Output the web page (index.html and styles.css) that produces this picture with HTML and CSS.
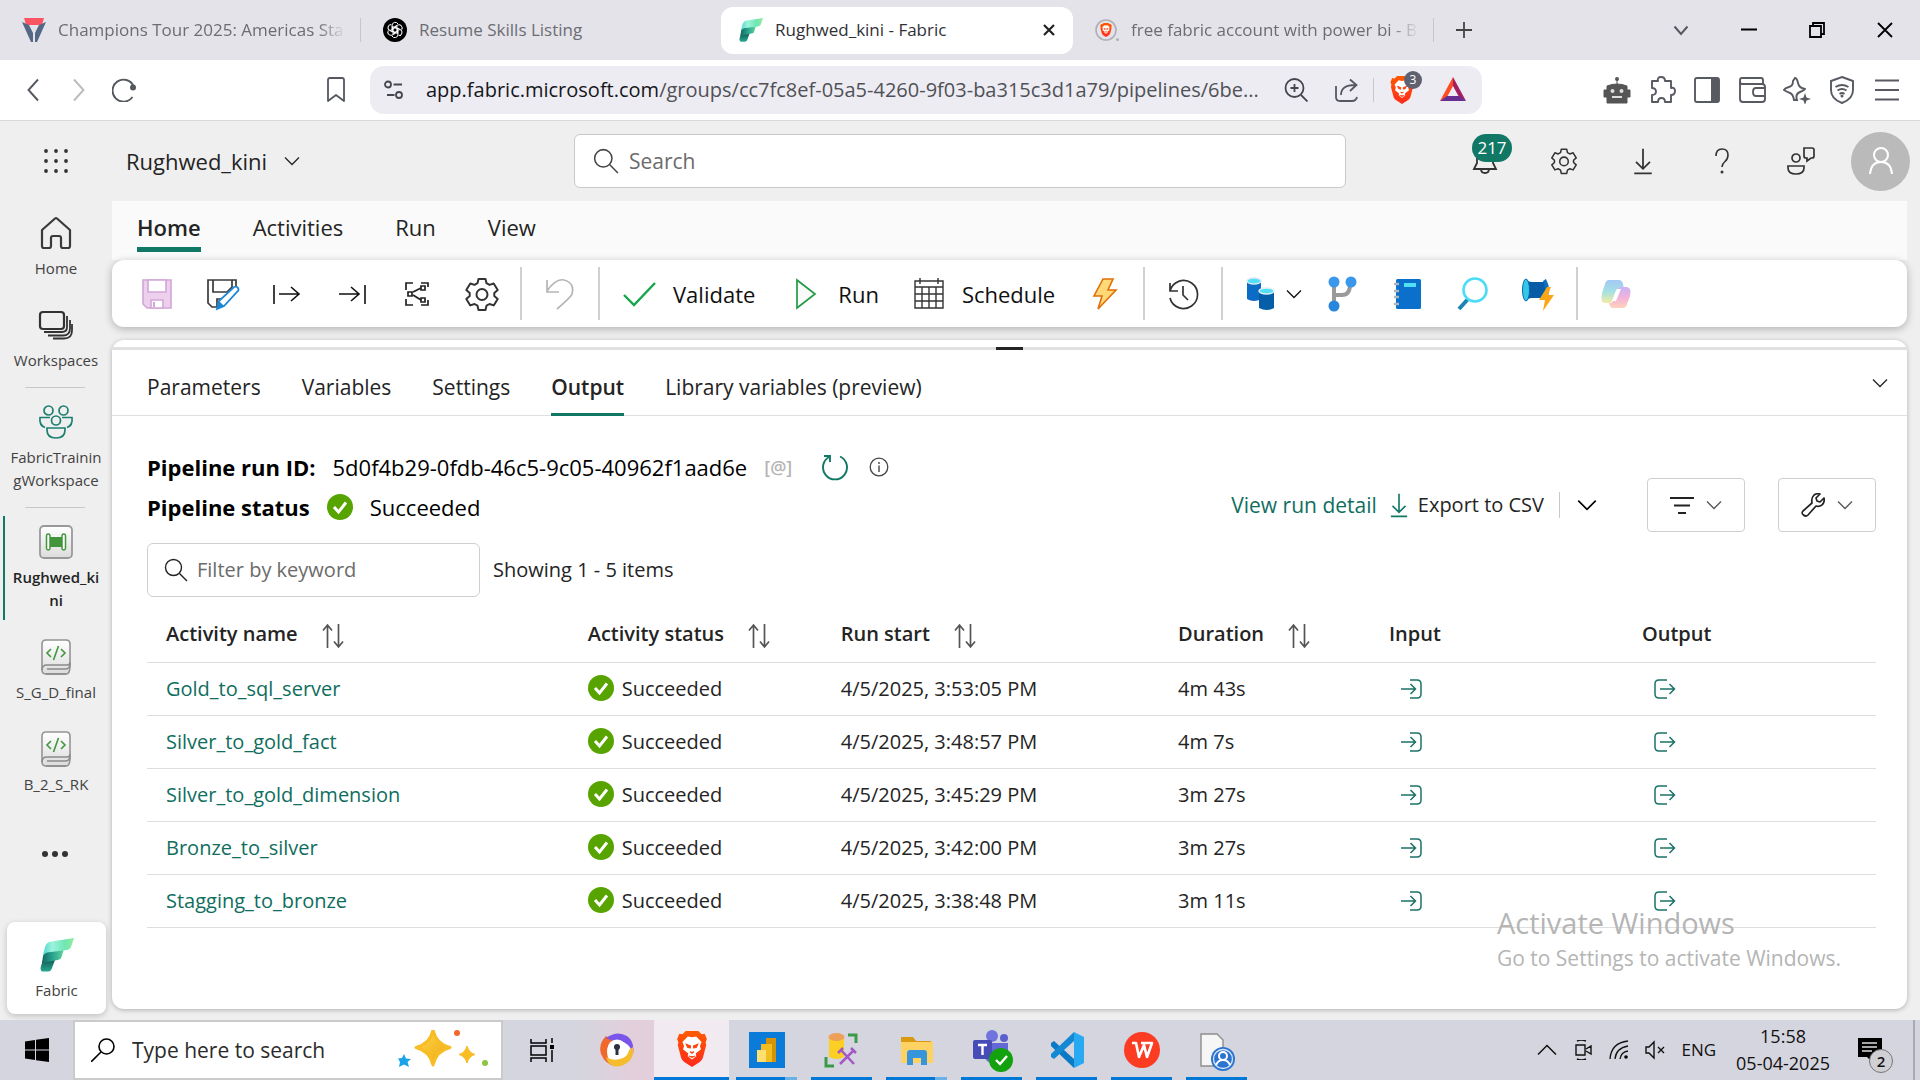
FILE: index.html
```html
<!DOCTYPE html>
<html lang="en">
<head>
<meta charset="utf-8">
<title>Rughwed_kini - Fabric</title>
<link rel="stylesheet" href="styles.css">
</head>
<body>
<svg class="sprite" aria-hidden="true">
  <defs>
    <linearGradient id="fab-a" x1="0" y1="0" x2="1" y2="0"><stop offset="0" stop-color="#4fd8cf"/><stop offset=".3" stop-color="#9df3dc"/><stop offset=".7" stop-color="#6fe6b4"/><stop offset="1" stop-color="#93ea9c"/></linearGradient>
    <linearGradient id="fab-b" x1="0" y1="0" x2="1" y2="0"><stop offset="0" stop-color="#12685f"/><stop offset=".5" stop-color="#2ba58f"/><stop offset="1" stop-color="#62d69b"/></linearGradient>
    <linearGradient id="fab-c" x1="0" y1="0" x2="0" y2="1"><stop offset="0" stop-color="#0b4a46"/><stop offset="1" stop-color="#28a892"/></linearGradient>
    <linearGradient id="metal" x1="0" y1="0" x2="0" y2="1"><stop offset="0" stop-color="#fff"/><stop offset="1" stop-color="#dcdcdc"/></linearGradient>
    <linearGradient id="cop-a" x1="0" y1="0" x2="0" y2="1"><stop offset="0" stop-color="#a3c8f5"/><stop offset=".5" stop-color="#a4e0e4"/><stop offset="1" stop-color="#f3eda0"/></linearGradient>
    <linearGradient id="cop-b" x1="0" y1="0" x2="0" y2="1"><stop offset="0" stop-color="#c9b4f4"/><stop offset=".5" stop-color="#f2b2dc"/><stop offset="1" stop-color="#ffd2b8"/></linearGradient>
    <linearGradient id="brave-g" x1="0" y1="0" x2="0" y2="1"><stop offset="0" stop-color="#ff5a00"/><stop offset="1" stop-color="#ff2a1c"/></linearGradient>
    <linearGradient id="star-g" x1="0" y1="0" x2="1" y2="1"><stop offset="0" stop-color="#ffd84a"/><stop offset="1" stop-color="#efa510"/></linearGradient>
  </defs>
  <symbol id="i-chevron" viewBox="0 0 16 16"><path d="M1 4.500l7 7 7-7" fill="none" stroke="currentColor" stroke-width="1.300"/></symbol>
  <symbol id="i-search" viewBox="0 0 24 24"><circle cx="9.500" cy="9.500" r="8" fill="none" stroke="currentColor" stroke-width="1.400"/><path d="M15.500 15.500l7.500 7.500" stroke="currentColor" stroke-width="1.400"/></symbol>
  <symbol id="i-fabric" viewBox="0 0 34 34"><path d="M1 28l3-9 11 3-3 8c-.7 2-1.500 3.500-4 3.500H3c-2 0-3-2-2-5.500z" fill="url(#fab-c)"/><path d="M3 18c1-3 2-4 5-4.500l16-2.500-2.500 8c-.6 2-1.500 2.500-4 3L2 25z" fill="url(#fab-b)"/><path d="M5 9c1.500-4 3-5 6.500-5.500L34 0l-3 9c-.8 2-2 2.500-4 3L7 14.500 3 17z" fill="url(#fab-a)"/></symbol>
  <symbol id="i-brave" viewBox="0 0 28 34"><path d="M8 0h12l3 3 3-.5 2 5-1.200 3.500.7 2-3 11.500c-.5 2-1.500 3.500-3.500 5L14 34l-7-4.500c-2-1.500-3-3-3.500-5L.5 13l.7-2L0 7.500l2-5L5 3z" fill="url(#brave-g)"/><path d="M14 6l4-.7 5 5-1.500 4 1 3-5 4 .5 2.500-4 3-4-3 .5-2.500-5-4 1-3L5 10.300l5-5z" fill="#fff"/><path d="M8.500 12.500l4 1.500v2l-2.500-.5zM19.500 12.500l-4 1.500v2l2.500-.5zM12 19.500l2 1.500 2-1.500M11 23.500l3 1.500 3-1.500" fill="#ff4310" stroke="#ff4310"/></symbol>
  <symbol id="i-ok" viewBox="0 0 26 26"><circle cx="13" cy="13" r="13" fill="#57a300"/><path d="M7 13l4.500 5L19 8.500" fill="none" stroke="#fff" stroke-width="3"/></symbol>
  <symbol id="i-sort" viewBox="0 0 24 26"><path d="M6.500 25V3M2 7.500L6.500 2 11 7.500M17.500 1v22M13 18.500l4.500 5.500 4.500-5.500" fill="none" stroke="#555" stroke-width="1.700"/></symbol>
  <symbol id="i-in" viewBox="0 0 24 22"><path d="M10 2h7q4 0 4 4v10q0 4-4 4h-7M1 11h14M10.500 6l5 5-5 5" fill="none" stroke="#1b7268" stroke-width="1.500"/></symbol>
  <symbol id="i-out" viewBox="0 0 24 22"><path d="M14 2H6Q2 2 2 6v10q0 4 4 4h8M7 11h14M16.500 6l5 5-5 5" fill="none" stroke="#1b7268" stroke-width="1.500"/></symbol>
  <symbol id="i-gear" viewBox="0 0 36 36"><path d="M14.500 3l7 0 1 4.200 3 1.700 4.200-1.400 4 6.500-3.400 3v2.900l3.400 3-4 6.500-4.200-1.400-3 1.700-1 4.300h-7l-1-4.300-3-1.700-4.200 1.400-4-6.500 3.400-3V17l-3.400-3 4-6.500 4.200 1.400 3-1.700z" fill="none" stroke="currentColor" stroke-width="2" stroke-linejoin="round"/><circle cx="18" cy="18.500" r="5.500" fill="none" stroke="currentColor" stroke-width="2"/></symbol>
  <symbol id="i-down" viewBox="0 0 24 32"><path d="M12 2v23M4 17l8 8 8-8M2 30h20" fill="none" stroke="currentColor" stroke-width="2"/></symbol>
  <symbol id="i-book" viewBox="0 0 30 36"><path d="M5 1h20q4 0 4 4v22q0 8-4 8H5q-4 0-4-4V5q0-4 4-4z" fill="url(#metal)" stroke="#949494" stroke-width="1.600"/><path d="M1 31q0-5 5-5h20q3 0 3-3M6 30h18q5 0 5-5M5 35h20" fill="none" stroke="#8b8b8b" stroke-width="1.500"/><path d="M10 10l-4 4 4 4M20 10l4 4-4 4M17.500 7l-5 14" fill="none" stroke="#3f963d" stroke-width="1.600"/></symbol>
</svg>

<header class="tabstrip">
  <div class="tab">
    <svg class="ic24" viewBox="0 0 24 24"><path d="M2 0h20l-2 7H4z" fill="#fb5563"/><path d="M0 4l7 3 4 8v9H9zM24 4l-7 3-4 8v9h2z" fill="#546785"/></svg>
    <span class="tab-title fade">Champions Tour 2025: Americas Sta</span>
  </div>
  <i class="tab-sep"></i>
  <div class="tab">
    <svg class="ic24" viewBox="0 0 24 24"><circle cx="12" cy="12" r="12" fill="#000"/><g fill="none" stroke="#fff" stroke-width="1"><path id="petal" d="M9 11V7.500a3.200 3.200 0 0 1 6-1.500M9 8l5.500 3.200v4"/><use href="#petal" transform="rotate(60 12 12)"/><use href="#petal" transform="rotate(120 12 12)"/><use href="#petal" transform="rotate(180 12 12)"/><use href="#petal" transform="rotate(240 12 12)"/><use href="#petal" transform="rotate(300 12 12)"/></g></svg>
    <span class="tab-title">Resume Skills Listing</span>
  </div>
  <div class="tab tab-active">
    <svg class="ic24"><use href="#i-fabric"/></svg>
    <span class="tab-title">Rughwed_kini - Fabric</span>
    <button class="plain" aria-label="Close tab"><svg class="ic12" viewBox="0 0 12 12"><path d="M1 1l10 10M11 1L1 11" stroke="#222" stroke-width="2.200"/></svg></button>
  </div>
  <div class="tab">
    <svg class="ic24" viewBox="0 0 24 24"><circle cx="11" cy="12" r="10" fill="none" stroke="#aeb0b6" stroke-width="1.600"/><circle cx="22.500" cy="21.500" r="1.500" fill="#aeb0b6"/><svg x="5" y="5" width="12" height="14"><use href="#i-brave"/></svg></svg>
    <span class="tab-title fade">free fabric account with power bi - B</span>
  </div>
  <i class="tab-sep"></i>
  <button class="plain new-tab" aria-label="New tab"><svg class="ic16" viewBox="0 0 16 16"><path d="M8 0v16M0 8h16" stroke="#444" stroke-width="1.800"/></svg></button>
  <div class="window-buttons">
    <button class="plain" aria-label="Search tabs"><svg class="ic16" viewBox="0 0 16 16"><path d="M1.500 4.500L8 12l6.500-7.500" fill="none" stroke="#55585e" stroke-width="2"/></svg></button>
    <button class="plain" aria-label="Minimize"><svg class="ic16" viewBox="0 0 16 16"><path d="M0 7.500h16" stroke="#000" stroke-width="2"/></svg></button>
    <button class="plain" aria-label="Restore"><svg class="ic16" viewBox="0 0 16 16"><path d="M1 4h11v11H1zM4 4V1h11v11h-3" fill="none" stroke="#000" stroke-width="1.800"/></svg></button>
    <button class="plain" aria-label="Close"><svg class="ic16" viewBox="0 0 16 16"><path d="M1 1l14 14M15 1L1 15" stroke="#000" stroke-width="1.800"/></svg></button>
  </div>
</header>

<nav class="browserbar" aria-label="Browser">
  <div class="history">
    <button class="plain" aria-label="Back"><svg class="ic24" viewBox="0 0 24 24"><path d="M16 1.500L6.500 12 16 22.500" fill="none" stroke="#54585f" stroke-width="1.900"/></svg></button>
    <button class="plain" aria-label="Forward"><svg class="ic24" viewBox="0 0 24 24"><path d="M7 1.500L16.500 12 7 22.500" fill="none" stroke="#b9bbc0" stroke-width="1.900"/></svg></button>
    <button class="plain" aria-label="Reload"><svg class="ic24" viewBox="0 0 24 24"><path d="M20.500 19A11 11 0 1 1 21.500 8" fill="none" stroke="#54585f" stroke-width="1.900"/><circle cx="21" cy="9.500" r="3" fill="#54585f"/></svg></button>
  </div>
  <button class="plain" aria-label="Bookmark"><svg class="ic26" viewBox="0 0 26 26"><path d="M5 3q0-2 2-2h12q2 0 2 2v21l-8-6-8 6z" fill="none" stroke="#54585f" stroke-width="1.800" stroke-linejoin="round"/></svg></button>
  <div class="urlbar">
    <svg class="ic20" viewBox="0 0 20 20"><g fill="none" stroke="#44474d" stroke-width="1.800"><circle cx="4" cy="4.500" r="3"/><path d="M9.500 4.500H18M3 15h7.500"/><circle cx="15" cy="15" r="3"/></g></svg>
    <a class="url" href="#"><span>app.fabric.microsoft.com</span>/groups/cc7fc8ef-05a5-4260-9f03-ba315c3d1a79/pipelines/6be...</a>
    <svg class="ic24" viewBox="0 0 24 24"><g fill="none" stroke="#44474d" stroke-width="1.800"><circle cx="10.500" cy="10" r="9"/><path d="M17 17l6.500 6.500M10.500 6v8M6.500 10h8"/></g></svg>
    <svg class="ic24 share" viewBox="0 0 24 24"><path d="M1 8v11q0 4 4 4h12q4 0 5-4M6 17q0-10 14-10M15 1.500L21.500 7 15 13" fill="none" stroke="#54585f" stroke-width="1.800"/></svg>
    <i class="url-sep"></i>
    <span class="shield"><svg class="ic28"><use href="#i-brave"/></svg><b>3</b></span>
    <svg class="ic28" viewBox="0 0 28 28"><path d="M14 1L1 25l7-4 6-11z" fill="#ff4b24"/><path d="M14 1l13 24-7-4-6-11z" fill="#a21f62"/><path d="M1 25h26l-7-5H8z" fill="#672e92"/></svg>
  </div>
  <div class="extensions">
    <svg class="ic28" viewBox="0 0 28 28"><circle cx="14" cy="3" r="2" fill="#555"/><path d="M14 4v5M4 10q10-4 20 0v4h3v7h-3v6H4v-6H1v-7h3z" fill="#555" stroke="#555"/><circle cx="9.500" cy="15" r="2" fill="#ddd"/><circle cx="18.500" cy="15" r="2" fill="#ddd"/><path d="M9 21h10" stroke="#ddd" stroke-width="2"/></svg>
    <svg class="ic28" viewBox="0 0 28 28"><path d="M4 5h6q-1-4 3-4t4 4h6v7q4-1 4 3t-4 4v7h-6q0-4-3.500-4T10 26H4v-7q4 0 4-3.500T4 12z" fill="none" stroke="#575a60" stroke-width="1.900" stroke-linejoin="round"/></svg>
    <svg class="ic28" viewBox="0 0 28 28"><rect x="2" y="2" width="24" height="24" rx="2" fill="none" stroke="#575a60" stroke-width="1.900"/><path d="M18 2h8v24h-8z" fill="#575a60"/></svg>
    <svg class="ic28" viewBox="0 0 28 28"><path d="M25 8V4q0-2-2-2H4Q2 2 2 4v19q0 3 3 3h19q3 0 3-3V11q0-3-3-3H4q-2 0-2-3M27 12h-9q-3 0-3 4t3 4h9" fill="none" stroke="#575a60" stroke-width="1.900"/></svg>
    <svg class="ic28" viewBox="0 0 28 28"><path d="M12 2q2 0 3 5t7 6q0 1-5 3t-3 8h-3q-1-6-4-7t-6-3q1-2 5-3t4-6z" fill="none" stroke="#575a60" stroke-width="1.900"/><path d="M22 17l1.500 4.500L28 23l-4.500 1.500L22 29l-1.500-4.500L16 23l4.500-1.500z" fill="#575a60"/></svg>
    <svg class="ic28" viewBox="0 0 28 28"><path d="M14 1l11 4v9q0 9-11 13Q3 23 3 14V5z" fill="none" stroke="#575a60" stroke-width="1.900"/><path d="M7.500 11q6.500-4 13 0M9.500 14.500q4.500-3 9 0M11.500 18q2.500-2 5 0" fill="none" stroke="#575a60" stroke-width="1.900"/><circle cx="14" cy="20" r="1.500" fill="#575a60"/></svg>
    <svg class="ic28" viewBox="0 0 28 28"><path d="M2 4.500h24M2 14h24M2 23.500h24" stroke="#575a60" stroke-width="1.900"/></svg>
  </div>
</nav>

<div class="app">
  <header class="topbar">
    <button class="plain waffle" aria-label="App launcher"><svg class="ic28" viewBox="0 0 28 28"><g fill="#333"><circle cx="4" cy="4" r="1.900"/><circle cx="14" cy="4" r="1.900"/><circle cx="24" cy="4" r="1.900"/><circle cx="4" cy="14" r="1.900"/><circle cx="14" cy="14" r="1.900"/><circle cx="24" cy="14" r="1.900"/><circle cx="4" cy="24" r="1.900"/><circle cx="14" cy="24" r="1.900"/><circle cx="24" cy="24" r="1.900"/></g></svg></button>
    <button class="plain item-name">Rughwed_kini <svg class="ic16"><use href="#i-chevron"/></svg></button>
    <label class="search"><svg class="ic26"><use href="#i-search"/></svg><input type="search" placeholder="Search" aria-label="Search"></label>
    <div class="topbar-actions">
      <button class="plain bell" aria-label="Notifications"><svg class="ic28" viewBox="0 0 28 28"><path d="M3 22l3-6V8q2-7 8-7t8 7v8l3 6zM10 22q0 4 4 4t4-4" fill="none" stroke="#333" stroke-width="1.800"/></svg><b>217</b></button>
      <button class="plain" aria-label="Settings"><svg class="ic28"><use href="#i-gear"/></svg></button>
      <button class="plain" aria-label="Downloads"><svg class="ic28"><use href="#i-down"/></svg></button>
      <button class="plain" aria-label="Help"><svg class="ic28" viewBox="0 0 28 28"><path d="M8 9q0-7 6-7t6 6q0 4-3 6.500T14 20" fill="none" stroke="#333" stroke-width="1.600"/><circle cx="14" cy="25" r="1.500" fill="#333"/></svg></button>
      <button class="plain" aria-label="Feedback"><svg class="ic28" viewBox="0 0 28 28"><g fill="none" stroke="#333" stroke-width="1.700"><circle cx="9" cy="11" r="4"/><path d="M1 19h16v2q0 6-8 6t-8-6zM17 1h8q2 0 2 2v6q0 2-2 2h-1l-4 3v-3h-1q-2 0-2-2z"/></g></svg></button>
      <button class="avatar" aria-label="Account"><svg class="ic28" viewBox="0 0 28 28"><g fill="none" stroke="#fff" stroke-width="2"><circle cx="14" cy="8" r="7"/><path d="M3 27q1-12 11-12t11 12"/></g></svg></button>
    </div>
  </header>

  <nav class="rail" aria-label="Fabric">
    <a href="#" class="rail-item"><svg class="ic36" viewBox="0 0 36 36"><path d="M4 15L17 3.500q1-1 2 0L32 15v16q0 2-2 2h-5q-2 0-2-2v-8q0-2-2-2h-6q-2 0-2 2v8q0 2-2 2H6q-2 0-2-2z" fill="none" stroke="#3a3a3a" stroke-width="2.200" stroke-linejoin="round"/></svg><span>Home</span></a>
    <a href="#" class="rail-item"><svg class="ic36" viewBox="0 0 36 36"><g fill="none" stroke="#333" stroke-width="2.200"><rect x="2" y="5" width="24" height="17" rx="3"/><path d="M6 25h18q5 0 5-5V9M10 28.500h15q7 0 7-7V13M15 31.500h11q8 0 8-8V17" stroke-width="1.800"/></g></svg><span>Workspaces</span></a>
    <hr>
    <a href="#" class="rail-item"><svg class="ic36" viewBox="0 0 36 36"><g fill="none" stroke="#1b8070" stroke-width="1.700"><circle cx="10.500" cy="6.500" r="4.500"/><circle cx="25.500" cy="6.500" r="4.500"/><circle cx="18" cy="16.500" r="4.500"/><path d="M9 24h18v2q0 8-9 8t-9-8zM12 13.500H2q-1 8 5 10M24 13.500h10q1 8-5 10"/></g></svg><span>FabricTrainin<wbr>gWorkspace</span></a>
    <hr>
    <a href="#" class="rail-item rail-current"><svg class="ic36" viewBox="0 0 36 36"><rect x="2" y="2" width="32" height="32" rx="4" fill="url(#metal)" stroke="#999" stroke-width="1.800"/><path d="M11 13h14v10H11z" fill="#43953b"/><g fill="#fff" stroke="#43953b" stroke-width="1.500"><rect x="8.500" y="10" width="3.500" height="16" rx="1.700"/><rect x="24" y="10" width="3.500" height="16" rx="1.700"/></g></svg><span>Rughwed_ki<wbr>ni</span></a>
    <a href="#" class="rail-item"><svg class="ic36"><use href="#i-book"/></svg><span>S_G_D_final</span></a>
    <a href="#" class="rail-item"><svg class="ic36"><use href="#i-book"/></svg><span>B_2_S_RK</span></a>
    <button class="plain more" aria-label="More"><svg class="ic28" viewBox="0 0 28 28"><g fill="#333"><circle cx="4" cy="14" r="3"/><circle cx="14" cy="14" r="3"/><circle cx="24" cy="14" r="3"/></g></svg></button>
    <a href="#" class="rail-product"><svg class="ic36" viewBox="0 0 36 36"><svg x="1" y="1" width="34" height="34"><use href="#i-fabric"/></svg></svg><span>Fabric</span></a>
  </nav>

  <main class="main">
    <div class="ribbon-tabs">
      <button class="plain current">Home</button><button class="plain">Activities</button><button class="plain">Run</button><button class="plain">View</button>
    </div>
    <div class="ribbon">
      <div class="group">
        <button class="plain" aria-label="Save" disabled><svg class="ic36" viewBox="0 0 36 36"><path d="M4 4h28v28H8l-4-4z" fill="#ecd0ee" stroke="#d3a6d8" stroke-width="1.600"/><path d="M9 4h18v12H9zM12 24h12v8H12z" fill="#fff" stroke="#d3a6d8" stroke-width="1.600"/><path d="M15 26v5" stroke="#d3a6d8" stroke-width="2"/></svg></button>
        <button class="plain" aria-label="Save as"><svg class="ic36" viewBox="0 0 36 36"><path d="M13 31H8l-4-4V4h28v8M9 4v12h14l5-5V4M13 31v-8h5" fill="none" stroke="#3a3a3a" stroke-width="1.700"/><path d="M13 33l2-8 15-14q3-1 4 1t0 3L20 30z" fill="#fff" stroke="#1b87d6" stroke-width="1.800"/><path d="M13 33l2-8 5 5z" fill="#1b87d6"/></svg></button>
        <button class="plain" aria-label="Expand from start"><svg class="ic36" viewBox="0 0 36 36"><path d="M5 9v19M10 18h20M22 11l8 7-8 7" fill="none" stroke="#111" stroke-width="1.600"/></svg></button>
        <button class="plain" aria-label="Expand to end"><svg class="ic36" viewBox="0 0 36 36"><path d="M31 9v19M5 18h20M17 11l8 7-8 7" fill="none" stroke="#111" stroke-width="1.600"/></svg></button>
        <button class="plain" aria-label="Auto align"><svg class="ic36" viewBox="0 0 36 36"><g fill="none" stroke="#222" stroke-width="1.700"><path d="M7 14V7h7M22 7h7v4M29 24v5h-7M14 29H7v-6M14 16l8-4M14 19l8 5"/><path d="M9 16h4v4H9zM22 10h4v4h-4zM22 22h4v4h-4z" fill="#fff"/></g></svg></button>
        <button class="plain dark" aria-label="Settings"><svg class="ic36"><use href="#i-gear"/></svg></button>
      </div>
      <div class="group">
        <button class="plain" aria-label="Undo" disabled><svg class="ic36" viewBox="0 0 36 36"><path d="M5 4v12h12M5 15Q14 2 22 4q11 3 8 14-1 3-15 15" fill="none" stroke="#b5b5b5" stroke-width="1.700"/></svg></button>
      </div>
      <div class="group group-run">
        <button class="plain labelled"><svg class="ic36" viewBox="0 0 36 36"><path d="M2 19l10 10L33 7" fill="none" stroke="#16a64b" stroke-width="2.400"/></svg>Validate</button>
        <button class="plain labelled"><svg class="ic36" viewBox="0 0 36 36"><path d="M10 4l18 14-18 14z" fill="#fafafa" stroke="#239b45" stroke-width="1.700"/></svg>Run</button>
        <button class="plain labelled"><svg class="ic36" viewBox="0 0 36 36"><path d="M4 5h28v27H4zM4 11h28M4 18h28M4 25h28M11 11v21M18 11v21M25 11v21M9 2v6M27 2v6" fill="none" stroke="#333" stroke-width="1.400"/></svg>Schedule</button>
        <button class="plain" aria-label="Trigger"><svg class="ic36" viewBox="0 0 36 36"><path d="M16 3h10l-5 11h8L11 33l4-13H7z" fill="#ffd978" stroke="#e0700a" stroke-width="1.600"/></svg></button>
      </div>
      <div class="group">
        <button class="plain" aria-label="Run history"><svg class="ic36" viewBox="0 0 36 36"><path d="M5 7v8h8M5 15A14 14 0 1 1 5 22M18 10v9l5 5" fill="none" stroke="#333" stroke-width="1.700"/></svg></button>
      </div>
      <div class="group">
        <button class="plain drop" aria-label="Copy data"><svg class="ic36" viewBox="0 0 36 36"><path d="M4 5v18q7 4 14 0V5z" fill="#0c6bc4"/><ellipse cx="11" cy="5" rx="7" ry="3" fill="#50dff5" stroke="#d8e9f3" stroke-width="1.500"/><path d="M16 15v17q8 4 15 0V15z" fill="#055fa8"/><ellipse cx="23.500" cy="15" rx="7.500" ry="3" fill="#50dff5" stroke="#e0eff8" stroke-width="1.500"/></svg><svg class="ic16"><use href="#i-chevron"/></svg></button>
        <button class="plain" aria-label="Dataflow"><svg class="ic36" viewBox="0 0 36 36"><path d="M9 8v22M25 8q0 11-8 11H9" fill="none" stroke="#9a9a9a" stroke-width="4"/><circle cx="9" cy="6" r="5.500" fill="#3a97ea"/><circle cx="26" cy="6" r="5.500" fill="#3a97ea"/><circle cx="9" cy="30" r="5.500" fill="#2887dd"/></svg></button>
        <button class="plain" aria-label="Notebook"><svg class="ic36" viewBox="0 0 36 36"><rect x="6" y="3" width="25" height="30" rx="1.500" fill="#0a70cb"/><path d="M14 7h12v4H14z" fill="#50dff5"/><path d="M4 8h5M4 15h5M4 21h5M4 28h5" stroke="#b0b6bd" stroke-width="2.400"/></svg></button>
        <button class="plain" aria-label="Lookup"><svg class="ic36" viewBox="0 0 36 36"><path d="M13 23L4 33" stroke="#1b84b5" stroke-width="4"/><circle cx="20" cy="14" r="11.500" fill="#fff" stroke="#4bdcf7" stroke-width="2.600"/></svg></button>
        <button class="plain" aria-label="Invoke pipeline"><svg class="ic36" viewBox="0 0 36 36"><path d="M6 3q2 3 6 3h10q3 0 4-3v22q-1-3-4-3H12q-4 0-6 3z" fill="#075ca5"/><ellipse cx="6" cy="14" rx="3.500" ry="11" fill="#35c6e8" stroke="#0968ae"/><path d="M26 3q6 11 0 22l-3-2q4-9 0-18z" fill="#0c70bd"/><path d="M27 11l-8 13h6l-2 11 11-16h-6l3-8z" fill="#fba616"/></svg></button>
      </div>
      <div class="group">
        <button class="plain" aria-label="Copilot"><svg class="ic36" viewBox="0 0 36 36"><path d="M11 4h10q3 0 4 4l1 5h-5q-3 0-4 4l-2 6q-1 4-4 4H7q-5 0-3-10l3-9q1-4 4-4z" fill="url(#cop-a)"/><path d="M25 32H15q-3 0-4-5 4 1 6-6l2-6q1-4 4-4h6q5 1 3 9l-3 8q-1 4-4 4z" fill="url(#cop-b)"/><path d="M19 13h4l-5 12h-4z" fill="#fff"/></svg></button>
      </div>
    </div>

    <section class="panel">
      <div class="splitter"><i></i></div>
      <div class="panel-tabs">
        <button class="plain">Parameters</button><button class="plain">Variables</button><button class="plain">Settings</button><button class="plain current">Output</button><button class="plain">Library variables (preview)</button>
        <button class="plain collapse" aria-label="Collapse panel"><svg class="ic16"><use href="#i-chevron"/></svg></button>
      </div>
      <div class="panel-body">
        <div class="summary">
          <div class="run-info">
            <div class="run-line"><strong>Pipeline run ID:</strong><span>5d0f4b29-0fdb-46c5-9c05-40962f1aad6e</span><span class="at">[@]</span>
              <button class="plain refresh" aria-label="Refresh"><svg class="ic28" viewBox="0 0 28 28"><path d="M3 3h6v6M9 3.500a12 12 0 1 0 10 0" fill="none" stroke="#117865" stroke-width="1.900"/></svg></button>
              <svg class="ic20" viewBox="0 0 20 20"><circle cx="10" cy="10" r="8.800" fill="none" stroke="#444" stroke-width="1.300"/><path d="M10 8.500V15M10 5v2" stroke="#444" stroke-width="1.400"/></svg></div>
            <div class="run-line"><strong>Pipeline status</strong><svg class="ic26"><use href="#i-ok"/></svg><span>Succeeded</span></div>
          </div>
          <div class="run-actions">
            <a href="#">View run detail</a>
            <button class="plain export"><svg class="ic26"><use href="#i-down"/></svg>Export to CSV</button>
            <button class="plain export-more" aria-label="Export options"><svg class="ic20"><use href="#i-chevron"/></svg></button>
            <button class="boxed" aria-label="Filter"><svg class="ic24" viewBox="0 0 24 24"><path d="M0 5h24M4 12.500h16M8 20h8" stroke="#222" stroke-width="2"/></svg><svg class="ic16"><use href="#i-chevron"/></svg></button>
            <button class="boxed" aria-label="Tools"><svg class="ic24" viewBox="0 0 24 24"><path d="M2 18l9-8q-1-5 2-8 3-2 6-1l-4 4 1 3 3 1 4-4q1 4-2 7-3 2-6 1l-8 9q-2 2-4.500 0T2 18z" fill="none" stroke="#222" stroke-width="1.700" stroke-linejoin="round"/></svg><svg class="ic16"><use href="#i-chevron"/></svg></button>
          </div>
        </div>
        <div class="filter-row">
          <label class="filter"><svg class="ic24"><use href="#i-search"/></svg><input type="text" placeholder="Filter by keyword" aria-label="Filter by keyword"></label>
          <span>Showing 1 - 5 items</span>
        </div>
        <table>
          <colgroup><col class="c10"><col class="c6"><col class="c8"><col class="c5"><col class="c6"><col class="c6"></colgroup>
          <thead><tr>
            <th scope="col">Activity name <svg class="sort"><use href="#i-sort"/></svg></th>
            <th scope="col">Activity status <svg class="sort"><use href="#i-sort"/></svg></th>
            <th scope="col">Run start <svg class="sort"><use href="#i-sort"/></svg></th>
            <th scope="col">Duration <svg class="sort"><use href="#i-sort"/></svg></th>
            <th scope="col">Input</th><th scope="col">Output</th>
          </tr></thead>
          <tbody>
            <tr><td><a href="#">Gold_to_sql_server</a></td><td><svg class="ok"><use href="#i-ok"/></svg>Succeeded</td><td>4/5/2025, 3:53:05 PM</td><td>4m 43s</td><td><button class="plain io" aria-label="Input"><svg><use href="#i-in"/></svg></button></td><td><button class="plain io" aria-label="Output"><svg><use href="#i-out"/></svg></button></td></tr>
            <tr><td><a href="#">Silver_to_gold_fact</a></td><td><svg class="ok"><use href="#i-ok"/></svg>Succeeded</td><td>4/5/2025, 3:48:57 PM</td><td>4m 7s</td><td><button class="plain io" aria-label="Input"><svg><use href="#i-in"/></svg></button></td><td><button class="plain io" aria-label="Output"><svg><use href="#i-out"/></svg></button></td></tr>
            <tr><td><a href="#">Silver_to_gold_dimension</a></td><td><svg class="ok"><use href="#i-ok"/></svg>Succeeded</td><td>4/5/2025, 3:45:29 PM</td><td>3m 27s</td><td><button class="plain io" aria-label="Input"><svg><use href="#i-in"/></svg></button></td><td><button class="plain io" aria-label="Output"><svg><use href="#i-out"/></svg></button></td></tr>
            <tr><td><a href="#">Bronze_to_silver</a></td><td><svg class="ok"><use href="#i-ok"/></svg>Succeeded</td><td>4/5/2025, 3:42:00 PM</td><td>3m 27s</td><td><button class="plain io" aria-label="Input"><svg><use href="#i-in"/></svg></button></td><td><button class="plain io" aria-label="Output"><svg><use href="#i-out"/></svg></button></td></tr>
            <tr><td><a href="#">Stagging_to_bronze</a></td><td><svg class="ok"><use href="#i-ok"/></svg>Succeeded</td><td>4/5/2025, 3:38:48 PM</td><td>3m 11s</td><td><button class="plain io" aria-label="Input"><svg><use href="#i-in"/></svg></button></td><td><button class="plain io" aria-label="Output"><svg><use href="#i-out"/></svg></button></td></tr>
          </tbody>
        </table>
      </div>
    </section>
  </main>
</div>

<div class="watermark"><p class="wm-title">Activate Windows</p><p>Go to Settings to activate Windows.</p></div>

<footer class="taskbar">
  <button class="plain start" aria-label="Start"><svg class="ic24" viewBox="0 0 24 24"><path d="M0 3.500l10-1.500v9.500H0zM11 1.800L24 0v11.500H11zM0 12.500h10V22L0 20.500zM11 12.500h13V24l-13-1.800z"/></svg></button>
  <label class="task-search"><svg class="ic24" viewBox="0 0 24 24"><circle cx="15.500" cy="8.500" r="7.500" fill="none" stroke="#000" stroke-width="1.600"/><path d="M10 14L0 24" stroke="#000" stroke-width="1.600"/></svg><input type="text" placeholder="Type here to search" aria-label="Type here to search">
    <svg class="sparkles" viewBox="0 0 92 40"><path d="M36 0q3 14 17 17.500Q39 21 36 35q-3-14-17-17.500Q33 14 36 0z" fill="url(#star-g)" stroke="#f7bd24" stroke-width="3" stroke-linejoin="round"/><path d="M70 16q2 7 8 8.500-6 1.500-8 8.500-2-7-8-8.500 6-1.500 8-8.500z" fill="#f9bc22" stroke="#f9bc22"/><path d="M7 24l2 4.500 5 .5-3.500 3L12 37l-5-2.500L2 37l1-5-2-3.500 4-.5z" fill="#1aa3ea"/><circle cx="60" cy="3" r="3" fill="#f1662a"/><circle cx="88" cy="33" r="3" fill="#8cc63f"/></svg></label>
  <div class="tasks">
    <button class="plain" aria-label="Task view"><svg class="ic24" viewBox="0 0 24 24"><path d="M1 1v4h15V1M1 8h15v9H1zM1 24v-4h15v4M22 0v5M22 12v12" fill="none" stroke="#000" stroke-width="1.500"/><path d="M20 7h4v4h-4z"/></svg></button>
    <button class="plain task-tint" aria-label="Secure browser"><svg class="ic36" viewBox="0 0 36 36"><circle cx="18" cy="18" r="13" fill="#fff"/><path d="M7 4q-8 8-5 18 4 10 14 12-8-6-8-14T14 9z" fill="#f0682b"/><path d="M7 6Q18-2 28 4q8 6 6 18-2-8-8-11-6-4-12-2z" fill="#7a55ea"/><path d="M34 15q2 10-6 16-7 5-14 3-6-3-7-9 6 4 14 2 8-2 9-9z" fill="#f5bd2e"/><circle cx="18" cy="17" r="9.500" fill="#fff"/><circle cx="18" cy="15" r="3" fill="#2b3040"/><path d="M16.500 16h3v7h-3z" fill="#2b3040"/></svg></button>
    <button class="plain task-active" aria-label="Brave"><svg class="ic36"><use href="#i-brave"/></svg></button>
    <button class="plain running stacked" aria-label="Power BI"><svg class="ic36" viewBox="0 0 36 36"><path d="M0 0h36v36H0z" fill="#0a7bd8"/><path d="M17 6h10v24H17z" fill="#d59408"/><path d="M12 12h11v18H12z" fill="#f3bd20"/><path d="M8 18h9v12H8z" fill="#ffdf70"/></svg></button>
    <button class="plain running" aria-label="SQL Server Management Studio"><svg class="ic36" viewBox="0 0 36 36"><path d="M5 5v20q8 4 15 0V5z" fill="#fbcf24"/><ellipse cx="12.500" cy="5" rx="8" ry="4" fill="#eda058"/><path d="M24 3h8v8M10 34H2v-9" fill="none" stroke="#3b9a48" stroke-width="3"/><path d="M16 32l14-14M17 18l13 14M27 16l5 5M14 21l5-5" stroke="#a557c5" stroke-width="2.500"/></svg></button>
    <button class="plain running stacked" aria-label="File Explorer"><svg class="ic36" viewBox="0 0 36 36"><path d="M2 5h12l3 4h15v5H2z" fill="#d99a12"/><path d="M2 10h32v21H2z" fill="#fdd262"/><path d="M8 33V21q0-3 3-3h14q3 0 3 3v12h-6v-7h-8v7z" fill="#3695db"/></svg></button>
    <button class="plain running" aria-label="Teams"><svg class="ic44" viewBox="0 0 44 44"><circle cx="22" cy="8" r="6" fill="#6f73dd"/><circle cx="34" cy="10" r="4" fill="#5b60cf"/><path d="M14 15h24v12q-3 9-12 9t-12-8z" fill="#6368d6"/><rect x="3" y="12" width="19" height="19" rx="2" fill="#464bb5"/><path d="M8 17h9M12.500 17v10" stroke="#fff" stroke-width="2.400"/><circle cx="31" cy="32" r="12" fill="#13a10e"/><path d="M26 32l4 4 7-8" fill="none" stroke="#fff" stroke-width="2.400"/></svg></button>
    <button class="plain running" aria-label="Visual Studio Code"><svg class="ic36" viewBox="0 0 36 36"><path d="M2 11l3-2 20 18v9L2 14z" fill="#0b7ac4"/><path d="M2 25l3 2 20-18V0L2 22z" fill="#1389d3"/><path d="M25 0l10 5v26l-10 5z" fill="#29a9f2"/></svg></button>
    <button class="plain running" aria-label="WPS Office"><svg class="ic36" viewBox="0 0 36 36"><circle cx="18" cy="18" r="18" fill="#fb3c22"/><path d="M8 11h4l3 14 5-12 3 12 5-14H17" fill="none" stroke="#fff" stroke-width="2.600" stroke-linejoin="round"/></svg></button>
    <button class="plain running" aria-label="Document"><svg class="ic44" viewBox="0 0 44 44"><path d="M6 6h16l6 6v26H6z" fill="#f6f6f6" stroke="#8d8d8d" stroke-width="1.400"/><circle cx="28" cy="31" r="12" fill="#2c74cf"/><circle cx="28" cy="31" r="9.500" fill="#2c74cf" stroke="#d5e5fa" stroke-width="1.300"/><circle cx="28" cy="28" r="4" fill="#2c74cf" stroke="#fff" stroke-width="2"/><path d="M21 37q2-5 7-5t7 5" fill="none" stroke="#fff" stroke-width="2"/></svg></button>
  </div>
  <div class="tray">
    <svg class="ic20" viewBox="0 0 20 20"><path d="M1 14.500l9-9 9 9" fill="none" stroke="#111" stroke-width="1.500"/></svg>
    <svg class="ic20" viewBox="0 0 20 20"><path d="M3 5h9v10H3zM13 9l5-3v8l-5-3M4 1q4-2 9 0M4 19q4 2 9 0" fill="none" stroke="#111" stroke-width="1.400"/></svg>
    <svg class="ic20" viewBox="0 0 20 20"><path d="M1 19Q2 3 19 1M6 19Q7 8 19 6M11 19q1-7 8-8" fill="none" stroke="#111" stroke-width="1.300"/><circle cx="17" cy="17" r="1.800"/></svg>
    <svg class="ic20" viewBox="0 0 20 20"><path d="M1 7h3l5-5v16l-5-5H1zM13 7l6 6M19 7l-6 6" fill="none" stroke="#111" stroke-width="1.400"/></svg>
    <span>ENG</span>
    <time class="clock">15:58<br>05-04-2025</time>
    <button class="plain notify" aria-label="Notifications"><svg class="ic24" viewBox="0 0 24 24"><path d="M0 0h24v19H14v5l-5-5H0z"/><path d="M4 5h15M4 9h15M4 13h10" stroke="#ddd" stroke-width="1.300"/></svg><b>2</b></button>
  </div>
</footer>
</body>
</html>
```
FILE: styles.css
```css
* { box-sizing: border-box; }
body {
  margin: 0;
  min-height: 100vh;
  display: flex;
  flex-direction: column;
  position: relative;
  background: #efefef;
  color: #242424;
  font: 20px/28px "Open Sans", "Noto Sans", sans-serif;
}
a { color: #0f6e5e; text-decoration: none; }
p { margin: 0; }
svg { display: block; flex: none; }
input { border: 0; outline: 0; background: none; padding: 0; min-width: 0; flex: 1; font: inherit; color: inherit; }
input::placeholder { color: #6b6b6b; opacity: 1; }
.sprite { position: absolute; width: 0; height: 0; }
.plain { border: 0; padding: 0; background: none; font: inherit; color: inherit; display: flex; align-items: center; justify-content: center; white-space: nowrap; }
.ic12 { width: 12px; height: 12px; }
.ic16 { width: 16px; height: 16px; }
.ic20 { width: 20px; height: 20px; }
.ic24 { width: 24px; height: 24px; }
.ic26 { width: 26px; height: 26px; }
.ic28 { width: 28px; height: 28px; }
.ic36 { width: 36px; height: 36px; }
.ic44 { width: 44px; height: 44px; }

/* Browser tabs */
.tabstrip { display: flex; align-items: center; gap: 4px; height: 60px; background: #e4e3e9; font-size: 17px; color: #6c6d73; padding-left: 4px; }
.tab { display: flex; align-items: center; gap: 12px; width: 352px; height: 47px; padding: 0 10px 0 18px; }
.tab-title { flex: 1; overflow: hidden; white-space: nowrap; }
.fade { mask-image: linear-gradient(to right, #000 90%, transparent); }
.tab-active { background: #fff; border-radius: 12px; color: #303136; padding-right: 18px; }
.tab-sep { width: 1px; height: 24px; background: #c6c6cc; }
.new-tab { margin-left: 18px; }
.window-buttons { margin-left: auto; display: flex; gap: 52px; padding-right: 27px; }

/* Address bar */
.browserbar { display: flex; align-items: center; height: 61px; background: #fff; border-bottom: 1px solid #d9d9dc; padding: 0 19px 0 22px; }
.history { display: flex; gap: 21px; margin-right: 187px; }
.urlbar { flex: 1; max-width: 1112px; display: flex; align-items: center; height: 48px; border-radius: 14px; background: #edecf2; margin-left: 21px; padding: 0 15px 0 14px; }
.url { flex: 1; margin-left: 22px; color: #505157; white-space: nowrap; overflow: hidden; }
.url span { color: #16171b; }
.share { margin: 0 14px 0 27px; }
.url-sep { width: 1px; height: 24px; background: #c6c6cc; margin-right: 14px; }
.shield { position: relative; margin-right: 23px; }
.shield b { position: absolute; left: 16px; top: -5px; width: 18px; height: 18px; border-radius: 9px; background: #5f6171; color: #fff; font: 12px/18px "Open Sans", sans-serif; text-align: center; }
.extensions { display: flex; gap: 17px; margin-left: auto; }

/* App shell */
.app { flex: 1; display: grid; grid-template-columns: 112px 1fr; grid-template-rows: 80px 1fr; padding-right: 13px; }
.topbar { grid-column: 1 / 3; display: grid; grid-template-columns: 112px 462px minmax(0, 772px) 1fr; align-items: center; margin-right: -13px; font-size: 21px; }
.item-name { justify-self: start; margin-left: 14px; gap: 17px; font-size: 22px; }
.search { display: flex; align-items: center; gap: 10px; height: 54px; border: 1px solid #c9c9c9; border-radius: 6px; background: #fff; padding: 0 18px; color: #444; }
.topbar-actions { display: flex; align-items: center; justify-content: flex-end; gap: 51px; padding-right: 10px; color: #333; }
.bell { position: relative; }
.bell b { position: absolute; left: 1px; top: -13px; width: 40px; height: 28px; border-radius: 14px; background: #117865; color: #fff; font: 17px/27px "Open Sans", sans-serif; text-align: center; }
.avatar { border: 0; width: 59px; height: 59px; border-radius: 50%; background: #bababa; display: flex; align-items: center; justify-content: center; margin-left: -15px; }

/* Left rail */
.rail { display: flex; flex-direction: column; padding: 6px 6px 6px 3px; font-size: 15px; line-height: 23px; }
.rail-item, .rail-product { display: flex; flex-direction: column; align-items: center; gap: 6px; padding: 8px 4px 8px 7px; color: #424242; text-align: center; }
.rail-item + .rail-item { margin-top: 11px; }
.rail hr { width: 60px; height: 1px; border: 0; background: #c8c8c8; margin: 7px auto 8px; }
.rail-current { border-left: 2px solid #117865; padding-left: 5px; color: #242424; font-weight: 600; }
.more { margin-top: 36px; }
.rail-product { margin: auto 0 0 4px; padding: 15px 4px 12px; border-radius: 8px; background: #fff; box-shadow: 0 2px 6px #0003; }

/* Ribbon */
.main { display: flex; flex-direction: column; min-width: 0; }
.ribbon-tabs { display: flex; gap: 52px; height: 59px; background: #fafafa; padding: 0 25px; font-size: 22px; }
.ribbon-tabs .plain { height: 51px; border-bottom: 5px solid transparent; padding-top: 6px; }
.ribbon-tabs .current { border-color: #117865; font-weight: 600; }
.ribbon { display: flex; align-items: center; height: 67px; border-radius: 12px; background: #fff; box-shadow: 0 2px 8px #0004; padding: 0 7px; font-size: 22px; color: #111; }
.group { display: flex; align-items: center; gap: 29px; height: 53px; padding: 0 20px; }
.group + .group { border-left: 2px solid #d0d0d0; }
.group-run { gap: 32px; padding-left: 22px; }
.labelled { gap: 15px; }
.dark { color: #333; }
.drop { gap: 7px; margin-right: -6px; }

/* Output panel */
.panel { flex: 1; display: flex; flex-direction: column; margin: 13px 0 11px; border-radius: 12px; background: #fff; box-shadow: 0 1px 5px #0004; }
.splitter { display: flex; justify-content: center; height: 10px; margin-bottom: 1px; border-bottom: 3px solid #e0e0e0; padding-top: 7px; }
.splitter i { width: 27px; height: 3px; background: #242424; }
.panel-tabs { display: flex; gap: 41px; height: 65px; border-bottom: 1px solid #e0e0e0; padding: 0 19px 0 35px; font-size: 21px; }
.panel-tabs .plain { height: 65px; border-bottom: 3px solid transparent; padding-top: 9px; }
.panel-tabs .current { border-color: #117865; font-weight: 600; }
.panel-tabs .collapse { margin-left: auto; padding-top: 2px; }
.panel-body { padding: 31px 31px 20px 35px; }
.summary { display: flex; justify-content: space-between; align-items: flex-end; margin-bottom: 11px; color: #000; }
.run-info { padding-bottom: 5px; font-size: 22px; }
.run-line { display: flex; align-items: center; gap: 17px; height: 40px; }
.refresh { margin-left: 12px; margin-right: 3px; }
.at { color: #b5b5b5; font-size: 18px; font-weight: 600; }
.run-actions { display: flex; align-items: center; height: 54px; }
.run-actions a { font-size: 21px; }
.export { gap: 6px; margin-left: 9px; color: #242424; }
.export svg { color: #117865; }
.export-more { height: 26px; border-left: 1px solid #c8c8c8; margin-left: 15px; padding-left: 17px; }
.boxed { display: flex; align-items: center; justify-content: center; gap: 12px; width: 98px; height: 54px; border: 1px solid #cfcfcf; border-radius: 4px; background: #fff; color: #555; margin-left: 33px; }
.export-more + .boxed { margin-left: 50px; }
.filter-row { display: flex; align-items: center; gap: 13px; }
.filter { display: flex; align-items: center; gap: 9px; width: 333px; height: 54px; border: 1px solid #cfcfcf; border-radius: 6px; padding: 0 16px; }
table { width: 100%; border-collapse: collapse; table-layout: fixed; }
.c10 { width: calc(100% * 10 / 41); }
.c8 { width: calc(100% * 8 / 41); }
.c6 { width: calc(100% * 6 / 41); }
.c5 { width: calc(100% * 5 / 41); }
th, td { height: 53px; padding: 0 0 0 19px; text-align: left; border-bottom: 1px solid #dedede; white-space: nowrap; }
th { height: 65px; padding-top: 10px; font-weight: 600; }
.sort { display: inline-block; width: 24px; height: 26px; margin-left: 18px; vertical-align: -8px; }
.ok { display: inline-block; width: 26px; height: 26px; margin-right: 8px; vertical-align: -5px; }
.io { margin-left: 11px; }
.io svg { width: 24px; height: 22px; }

.watermark { position: absolute; right: 79px; bottom: 108px; color: #b5b5b5; pointer-events: none; font-size: 21px; }
.wm-title { font-size: 29px; line-height: 42px; }

/* Taskbar */
.taskbar { display: flex; height: 60px; background: #d5d5df; color: #111; }
.start { width: 73px; }
.task-search { display: flex; align-items: center; width: 430px; border: 2px solid #cacaca; background: #fff; padding: 0 12px 0 16px; font-size: 21px; }
.task-search input { margin-left: 17px; }
.task-search input::placeholder { color: #2b2b2b; }
.sparkles { width: 92px; height: 40px; }
.tasks { display: flex; margin-left: 1px; }
.tasks .plain { position: relative; width: 75px; }
.tasks .task-tint { background: linear-gradient(to right, #d5d5df, #e2cfdb 70%); }
.tasks .task-active { background: #f1eaf0; border-bottom: 3px solid #0078d7; }
.running::after { content: ""; position: absolute; left: 7px; right: 7px; bottom: 0; height: 3px; background: #0078d7; }
.stacked::after { background: linear-gradient(to right, #0078d7 80%, #6cb0e8 80%); }
.tray { margin-left: auto; display: flex; align-items: center; gap: 16px; border-right: 2px solid #aaaab2; margin-right: 5px; padding-right: 31px; font-size: 17px; }
.clock { font-size: 18px; line-height: 27px; text-align: center; margin-left: 4px; }
.notify { position: relative; margin-left: 12px; }
.notify b { position: absolute; left: 11px; top: 11px; width: 24px; height: 24px; border: 1px solid #777; border-radius: 12px; background: #cfcfd4; font: 600 15px/22px "Open Sans", sans-serif; }
```
